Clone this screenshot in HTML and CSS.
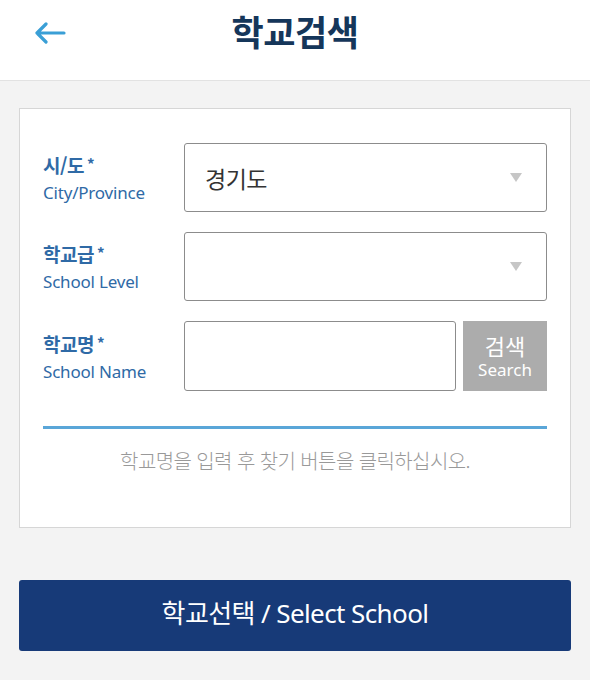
FILE: index.html
```html
<!DOCTYPE html>
<html lang="ko">
  <head>
    <meta charset="UTF-8">
    <meta name="viewport" content="width=device-width, initial-scale=1">
    <title>학교검색</title>
    <link rel="stylesheet" href="styles.css">
  </head>
  <body>
    <header class="topbar">
      <a class="back" href="#">
        <svg width="32" height="22" viewBox="0 0 32 22">
          <path d="M30 11H3M12 2L3 11l9 9" fill="none" stroke="#3a9fd6" stroke-width="3.2" stroke-linecap="round" stroke-linejoin="round"/>
        </svg>
      </a>
      <h1 class="title">학교검색</h1>
    </header>

    <main class="content">
      <section class="card">
        <div class="row">
          <div class="label">
            <strong>시/도<span class="req">*</span></strong>
            <span>City/Province</span>
          </div>
          <div class="select">
            <span class="value">경기도</span>
            <span class="caret"></span>
          </div>
        </div>

        <div class="row">
          <div class="label">
            <strong>학교급<span class="req">*</span></strong>
            <span>School Level</span>
          </div>
          <div class="select">
            <span class="value"></span>
            <span class="caret"></span>
          </div>
        </div>

        <div class="row">
          <div class="label">
            <strong>학교명<span class="req">*</span></strong>
            <span>School Name</span>
          </div>
          <div class="search-box">
            <input class="text-input" type="text">
            <button class="search-btn" type="button">
              <span class="ko">검색</span>
              <span class="en">Search</span>
            </button>
          </div>
        </div>

        <hr class="divider">
        <p class="hint">학교명을 입력 후 찾기 버튼을 클릭하십시오.</p>
      </section>

      <button class="submit" type="button">학교선택 / Select School</button>
    </main>
  </body>
</html>
```

FILE: styles.css
```css
body {
  margin: 0;
  background: #f3f3f3;
  font-family: "Noto Sans", "Noto Sans CJK KR", sans-serif;
}

.topbar {
  height: 80px;
  background: #fff;
  border-bottom: 1px solid #e2e2e2;
  display: flex;
  align-items: center;
  justify-content: center;
  position: relative;
}
.back {
  position: absolute;
  left: 34px;
  top: 22px;
  display: block;
  line-height: 0;
}
.title {
  margin: 0 0 20px;
  font-family: "Noto Sans CJK KR", sans-serif;
  font-size: 35px;
  font-weight: 700;
  color: #15365a;
  letter-spacing: -0.5px;
}

.content {
  padding: 27px 19px 0;
}

.card {
  background: #fff;
  border: 1px solid #d6d6d6;
  padding: 34px 23px 52px;
}

.row {
  display: flex;
  align-items: center;
  margin-bottom: 20px;
}
.label {
  width: 141px;
  display: flex;
  flex-direction: column;
  color: #2f6aa6;
}
.label strong {
  font-family: "Noto Sans CJK KR", sans-serif;
  font-size: 19px;
  font-weight: 700;
  line-height: 27px;
  letter-spacing: -0.5px;
}
.req {
  font-size: 15px;
  margin-left: 3px;
  vertical-align: 3px;
}
.label span:not(.req) {
  font-size: 17px;
  line-height: 25px;
  margin-top: 2px;
  letter-spacing: -0.2px;
}

.select {
  flex: 1;
  height: 69px;
  border: 1px solid #8c8c8c;
  border-radius: 3px;
  display: flex;
  align-items: center;
  justify-content: space-between;
  padding: 0 24px 0 20px;
  box-sizing: border-box;
}
.value {
  font-family: "Noto Sans CJK KR", sans-serif;
  font-size: 23px;
  color: #333;
  letter-spacing: -0.5px;
}
.caret {
  width: 0;
  height: 0;
  border-left: 6.5px solid transparent;
  border-right: 6.5px solid transparent;
  border-top: 9px solid #c6c6c6;
}

.search-box {
  flex: 1;
  display: flex;
  gap: 7px;
}
.text-input {
  flex: 1;
  min-width: 0;
  height: 70px;
  box-sizing: border-box;
  border: 1px solid #8c8c8c;
  border-radius: 3px;
  margin: 0;
}
.search-btn {
  width: 84px;
  height: 70px;
  border: 0;
  background: #acacac;
  color: #fff;
  display: flex;
  flex-direction: column;
  align-items: center;
  justify-content: center;
  padding: 0;
  font-family: "Noto Sans", "Noto Sans CJK KR", sans-serif;
}
.search-btn .ko {
  font-family: "Noto Sans CJK KR", sans-serif;
  font-size: 22px;
  line-height: 28px;
}
.search-btn .en {
  font-size: 17px;
  line-height: 22px;
}

.divider {
  border: 0;
  height: 3px;
  background: #5aa6d8;
  margin: 35px 0 0;
}
.hint {
  margin: 17px 0 0;
  text-align: center;
  font-family: "Noto Sans CJK KR", sans-serif;
  font-size: 20px;
  font-weight: 300;
  color: #999;
  letter-spacing: -0.6px;
}

.submit {
  display: block;
  width: 100%;
  height: 71px;
  margin-top: 52px;
  padding: 0 0 8px;
  background: #173a78;
  border: 0;
  border-radius: 3px;
  color: #fff;
  font-family: "Noto Sans", "Noto Sans CJK KR", sans-serif;
  font-size: 26px;
  letter-spacing: -0.6px;
}
```
